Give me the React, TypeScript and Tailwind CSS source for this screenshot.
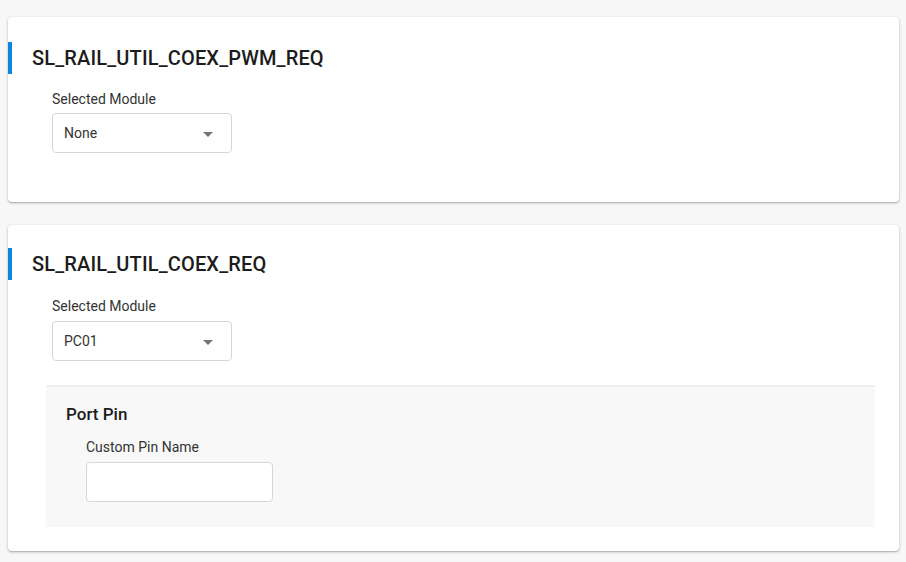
import React from "react";

function Caret() {
  return (
    <svg width="24" height="24" viewBox="0 0 24 24" className="absolute right-[11px] top-[8px]">
      <path d="M7 10l5 5 5-5z" fill="#757575" />
    </svg>
  );
}

function Select({ value }: { value: string }) {
  return (
    <div className="relative w-[180px] h-[40px] rounded-[4px] border border-[#d6d6d6] bg-white flex items-center pl-[11px] text-[14px] text-[#333]">
      {value}
      <Caret />
    </div>
  );
}

function Title({ text }: { text: string }) {
  return (
    <div className="flex items-center h-[32px]">
      <div className="w-[4px] h-[32px] bg-[#0a87d8]" />
      <div className="ml-[20px] text-[20px] font-medium text-[#1c1c1c] tracking-[0.15px]">{text}</div>
    </div>
  );
}

export default function App() {
  return (
    <div className="min-h-[562px] bg-[#f7f7f7] pt-[17px] pl-[8px] pr-[7px] pb-[11px]" style={{ fontFamily: "Roboto, 'Liberation Sans', sans-serif" }}>
      <div className="bg-white rounded-[4px] shadow-[0_1px_3px_rgba(0,0,0,0.25),0_1px_1px_rgba(0,0,0,0.12)] pt-[25px] pb-[49px]">
        <Title text="SL_RAIL_UTIL_COEX_PWM_REQ" />
        <div className="ml-[44px] mt-[15px]">
          <div className="text-[14px] text-[#333] leading-[20px]">Selected Module</div>
          <div className="mt-[4px]">
            <Select value="None" />
          </div>
        </div>
      </div>
      <div className="mt-[23px] bg-white rounded-[4px] shadow-[0_1px_3px_rgba(0,0,0,0.25),0_1px_1px_rgba(0,0,0,0.12)] pt-[23px] pb-[24px]">
        <Title text="SL_RAIL_UTIL_COEX_REQ" />
        <div className="ml-[44px] mt-[16px]">
          <div className="text-[14px] text-[#333] leading-[20px]">Selected Module</div>
          <div className="mt-[5px]">
            <Select value="PC01" />
          </div>
        </div>
        <div className="mt-[24px] ml-[38px] mr-[24px] bg-[#f8f8f8] border-t-2 border-[#eeeeee] pt-[16px] pb-[25px] pl-[20px]">
          <div className="text-[17px] font-medium text-[#1c1c1c] leading-[22px]">Port Pin</div>
          <div className="ml-[20px] mt-[12px]">
            <div className="text-[14px] text-[#333] leading-[20px]">Custom Pin Name</div>
            <div className="mt-[5px] w-[187px] h-[40px] rounded-[4px] border border-[#d6d6d6] bg-white" />
          </div>
        </div>
      </div>
    </div>
  );
}
